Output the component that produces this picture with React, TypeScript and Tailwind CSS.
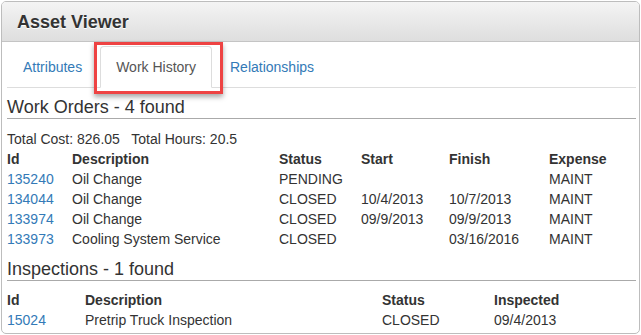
import React from "react";

type WorkOrder = {
  id: string;
  description: string;
  status: string;
  start: string;
  finish: string;
  expense: string;
};

const WORK_ORDERS: WorkOrder[] = [
  { id: "135240", description: "Oil Change", status: "PENDING", start: "", finish: "", expense: "MAINT" },
  { id: "134044", description: "Oil Change", status: "CLOSED", start: "10/4/2013", finish: "10/7/2013", expense: "MAINT" },
  { id: "133974", description: "Oil Change", status: "CLOSED", start: "09/9/2013", finish: "09/9/2013", expense: "MAINT" },
  { id: "133973", description: "Cooling System Service", status: "CLOSED", start: "", finish: "03/16/2016", expense: "MAINT" },
];

const INSPECTIONS = [
  { id: "15024", description: "Pretrip Truck Inspection", status: "CLOSED", inspected: "09/4/2013" },
];

const woCols = "grid grid-cols-[65px_207px_82px_88px_100px_1fr]";
const inCols = "grid grid-cols-[78px_297px_112px_1fr]";

export default function App() {
  return (
    <div className="h-[335px] w-[641px] bg-white pl-px pt-px font-['Liberation_Sans',Arial,sans-serif] text-[14px] leading-5 text-[#333]">
      <div className="h-[333px] w-[639px] overflow-hidden rounded-[5px] border border-[#bdbdbd] bg-white">
        <div className="flex h-[40px] items-center border-b border-[#c4c4c4] bg-gradient-to-b from-[#f4f4f4] to-[#dedede] pl-[15px]">
          <h1 className="text-[18px] font-bold text-[#333] [text-shadow:0_1px_0_#fff]">Asset Viewer</h1>
        </div>

        <div className="pl-[5px] pr-[3px]">
          {/* tabs */}
          <ul className="mt-[4px] flex border-b border-[#ddd]">
            <li className="-mb-px mr-[2px]">
              <a className="block border border-transparent px-[15px] py-[10px] text-[#337ab7]">Attributes</a>
            </li>
            <li className="relative -mb-px mr-[2px]">
              <a className="block rounded-t border border-[#ddd] border-b-transparent bg-white px-[15px] py-[10px] text-[#555]">
                Work History
              </a>
              <div className="absolute left-[-6px] top-[-4px] z-10 h-[52px] w-[129px] border-[3px] border-[#ee4343] shadow-[0_3px_5px_rgba(0,0,0,0.35)]" />
            </li>
            <li className="-mb-px">
              <a className="block border border-transparent px-[15px] py-[10px] text-[#337ab7]">Relationships</a>
            </li>
          </ul>

          {/* work orders */}
          <h4 className="mt-[9px] border-b border-[#aaa] pb-px text-[18px] leading-[20px]">Work Orders - 4 found</h4>
          <div className="mt-[10px] whitespace-pre">Total Cost: 826.05   Total Hours: 20.5</div>
          <div className={`${woCols} font-bold`}>
            <span>Id</span>
            <span>Description</span>
            <span>Status</span>
            <span>Start</span>
            <span>Finish</span>
            <span>Expense</span>
          </div>
          {WORK_ORDERS.map((wo) => (
            <div key={wo.id} className={woCols}>
              <a className="text-[#337ab7]">{wo.id}</a>
              <span>{wo.description}</span>
              <span>{wo.status}</span>
              <span>{wo.start}</span>
              <span>{wo.finish}</span>
              <span>{wo.expense}</span>
            </div>
          ))}

          {/* inspections */}
          <h4 className="mt-[10px] border-b border-[#aaa] pb-px text-[18px] leading-[20px]">Inspections - 1 found</h4>
          <div className={`${inCols} mt-[9px] font-bold`}>
            <span>Id</span>
            <span>Description</span>
            <span>Status</span>
            <span>Inspected</span>
          </div>
          {INSPECTIONS.map((ins) => (
            <div key={ins.id} className={inCols}>
              <a className="text-[#337ab7]">{ins.id}</a>
              <span>{ins.description}</span>
              <span>{ins.status}</span>
              <span>{ins.inspected}</span>
            </div>
          ))}
        </div>
      </div>
    </div>
  );
}
